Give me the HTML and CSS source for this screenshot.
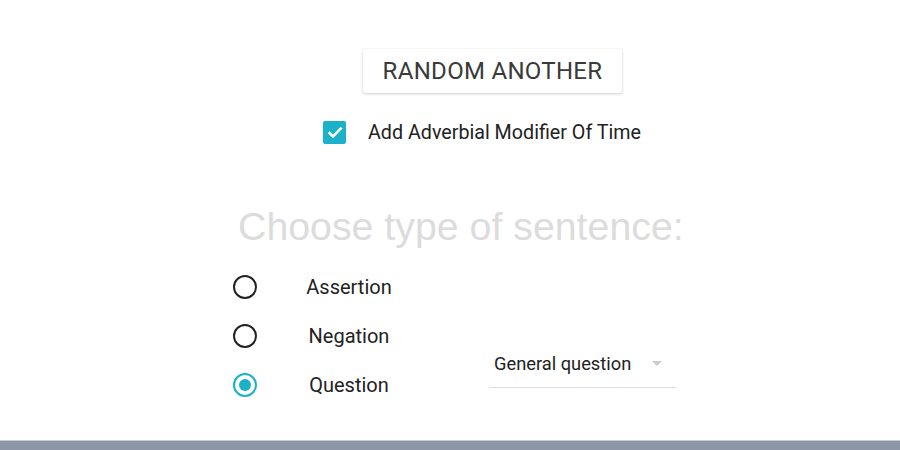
FILE: index.html
```html
<!DOCTYPE html>
<html>
<head>
<meta charset="utf-8">
<link rel="stylesheet" href="styles.css">
</head>
<body>
<div class="page">
  <main class="content">
    <div class="btn-row">
      <button class="btn">RANDOM ANOTHER</button>
    </div>
    <label class="check-row">
      <span class="checkbox">
        <svg width="18" height="18" viewBox="0 0 18 18"><path d="M2.6 9.2 L7 13.4 L15.6 4.6" fill="none" stroke="#fff" stroke-width="2.6"/></svg>
      </span>
      <span class="check-label">Add Adverbial Modifier Of Time</span>
    </label>
    <h2 class="title">Choose type of sentence:</h2>
    <div class="choices">
      <div class="radios">
        <div class="radio-row"><span class="radio"></span><span class="radio-label">Assertion</span></div>
        <div class="radio-row"><span class="radio"></span><span class="radio-label">Negation</span></div>
        <div class="radio-row"><span class="radio checked"></span><span class="radio-label">Question</span></div>
      </div>
      <div class="select">
        <span class="select-text">General question</span>
        <span class="arrow"></span>
      </div>
    </div>
  </main>
  <footer class="footer"></footer>
</div>
</body>
</html>
```

FILE: styles.css
```css
html, body {
  margin: 0;
  padding: 0;
  background: #fff;
}
.page {
  width: 900px;
  height: 450px;
  display: flex;
  flex-direction: column;
  font-family: Roboto, "Liberation Sans", sans-serif;
  color: #222;
}
.content {
  flex: 1;
}
.btn-row {
  padding-top: 49px;
  padding-left: 363px;
}
.btn {
  width: 259px;
  height: 44px;
  border: none;
  background: #fff;
  font-family: Roboto, sans-serif;
  font-size: 24px;
  color: #3a3a3a;
  letter-spacing: 0.3px;
  box-shadow: 0 1px 3px rgba(0,0,0,0.18), 0 0 1px rgba(0,0,0,0.15);
  border-radius: 2px;
  padding: 0;
}
.check-row {
  display: flex;
  align-items: center;
  margin-top: 27px;
  margin-left: 323px;
  height: 24px;
}
.checkbox {
  width: 23px;
  height: 23px;
  background: #1ab1c9;
  border-radius: 2px;
  display: flex;
  align-items: center;
  justify-content: center;
}
.check-label {
  margin-left: 22px;
  font-size: 19.7px;
  color: #222;
}
.title {
  margin: 59px 0 0 0;
  padding-left: 238px;
  font-family: "Liberation Sans", Arial, sans-serif;
  font-weight: normal;
  font-size: 39.3px;
  line-height: 46px;
  color: #dcdcdc;
}
.choices {
  display: flex;
  margin-top: 26px;
  margin-left: 233px;
}
.radios {
  display: flex;
  flex-direction: column;
  gap: 25px;
}
.radio-row {
  display: flex;
  align-items: center;
  height: 24px;
}
.radio {
  width: 20px;
  height: 20px;
  border: 2.5px solid #222;
  border-radius: 50%;
  box-sizing: content-box;
  position: relative;
}
.radio.checked {
  border-color: #1ab1c9;
}
.radio.checked::after {
  content: "";
  position: absolute;
  left: 4px;
  top: 4px;
  width: 12px;
  height: 12px;
  border-radius: 50%;
  background: #1ab1c9;
}
.radio-label {
  width: 184px;
  text-align: center;
  font-size: 20px;
  color: #222;
}
.select {
  align-self: flex-end;
  margin-left: 48px;
  margin-bottom: 9px;
  width: 187px;
  height: 44px;
  padding-bottom: 4px;
  border-bottom: 1px solid #ddd;
  display: flex;
  align-items: center;
  box-sizing: border-box;
}
.select-text {
  margin-left: 5px;
  font-size: 18.3px;
  color: #222;
}
.arrow {
  margin-left: 21px;
  width: 0;
  height: 0;
  border-left: 5px solid transparent;
  border-right: 5px solid transparent;
  border-top: 5px solid #ccc;
}
.footer {
  height: 9px;
  background: #8c96a7;
  border-top: 1px solid #c5ccd2;
}
```
